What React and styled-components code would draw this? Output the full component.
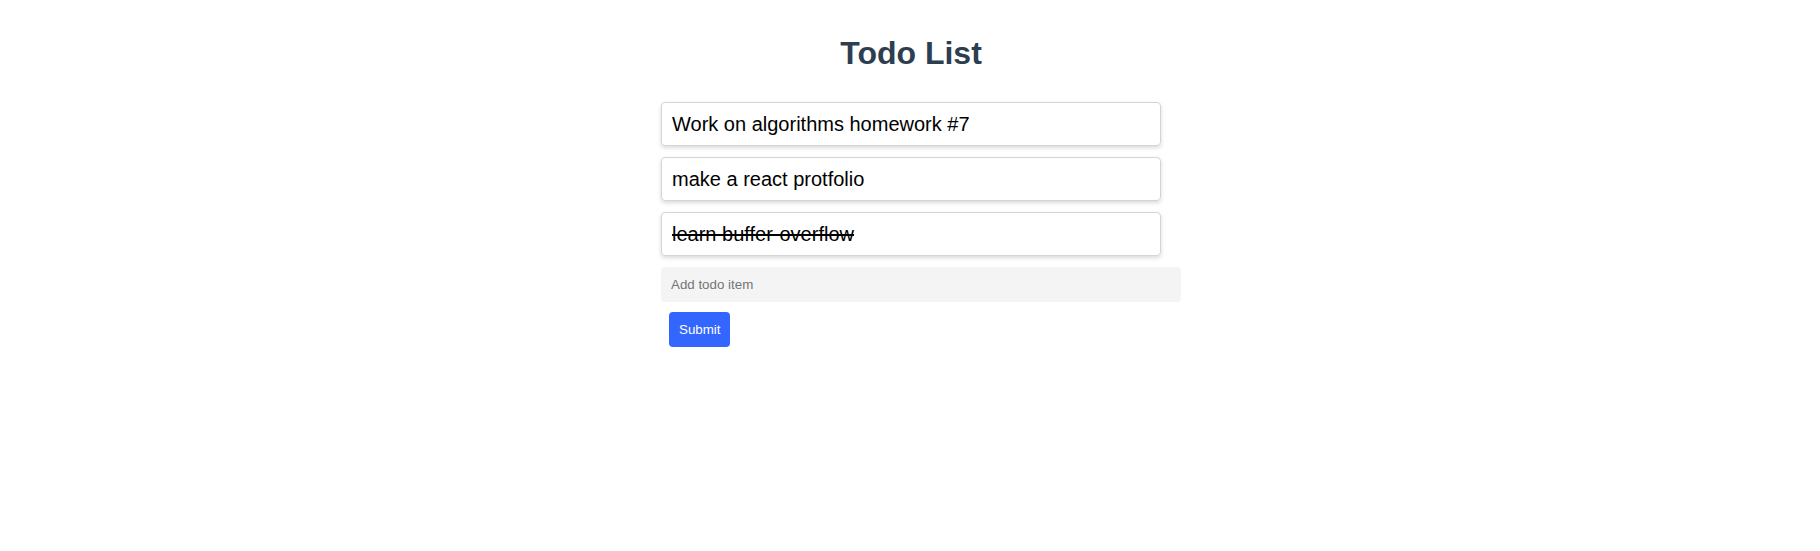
import { useState } from "react";
import styled, { createGlobalStyle } from "styled-components";

const GlobalStyle = createGlobalStyle`
  body {
    margin: 0;
    background: #ffffff;
    font-family: "Liberation Sans", Arial, sans-serif;
  }
`;

const Page = styled.div`
  padding: 35px 0 0 2px;
`;

const Title = styled.h1`
  margin: 0 0 30px;
  text-align: center;
  font-size: 32px;
  font-weight: bold;
  color: #2c3e50;
`;

const Wrapper = styled.div`
  width: 500px;
  margin: 0 auto;
`;

const TodoItem = styled.div`
  box-sizing: border-box;
  display: flex;
  align-items: center;
  height: 44px;
  padding: 0 10px;
  margin-bottom: 11px;
  border: 1px solid #d4d4d4;
  border-radius: 4px;
  box-shadow: 0 2px 4px rgba(0, 0, 0, 0.15);
  font-size: 20px;
  color: #000000;
  text-decoration: ${(p) => (p.$done ? "line-through" : "none")};
  cursor: pointer;
`;

const Form = styled.form`
  display: flex;
  flex-direction: column;
  align-items: flex-start;
`;

const TodoInput = styled.input`
  box-sizing: border-box;
  width: 520px;
  height: 35px;
  padding: 0 10px;
  border: none;
  border-radius: 4px;
  background: #f4f4f4;
  font-family: "Liberation Sans", Arial, sans-serif;
  font-size: 13.33px;
  outline: none;

  &::placeholder {
    color: #757575;
  }
`;

const SubmitButton = styled.button`
  box-sizing: border-box;
  height: 35px;
  margin: 10px 0 0 8px;
  padding: 0 10px;
  border: none;
  border-radius: 4px;
  background: #3366ff;
  color: #ffffff;
  font-family: "Liberation Sans", Arial, sans-serif;
  font-size: 13.33px;
  cursor: pointer;
`;

function App() {
  const [todos, setTodos] = useState([
    { text: "Work on algorithms homework #7", done: false },
    { text: "make a react protfolio", done: false },
    { text: "learn buffer-overflow", done: true },
  ]);
  const [value, setValue] = useState("");

  const toggle = (i) =>
    setTodos(todos.map((t, j) => (j === i ? { ...t, done: !t.done } : t)));

  const handleSubmit = (e) => {
    e.preventDefault();
    if (!value.trim()) return;
    setTodos([...todos, { text: value, done: false }]);
    setValue("");
  };

  return (
    <Page>
      <GlobalStyle />
      <Title>Todo List</Title>
      <Wrapper>
        {todos.map((todo, i) => (
          <TodoItem key={i} $done={todo.done} onClick={() => toggle(i)}>
            {todo.text}
          </TodoItem>
        ))}
        <Form onSubmit={handleSubmit}>
          <TodoInput
            placeholder="Add todo item"
            value={value}
            onChange={(e) => setValue(e.target.value)}
          />
          <SubmitButton type="submit">Submit</SubmitButton>
        </Form>
      </Wrapper>
    </Page>
  );
}

export default App;
